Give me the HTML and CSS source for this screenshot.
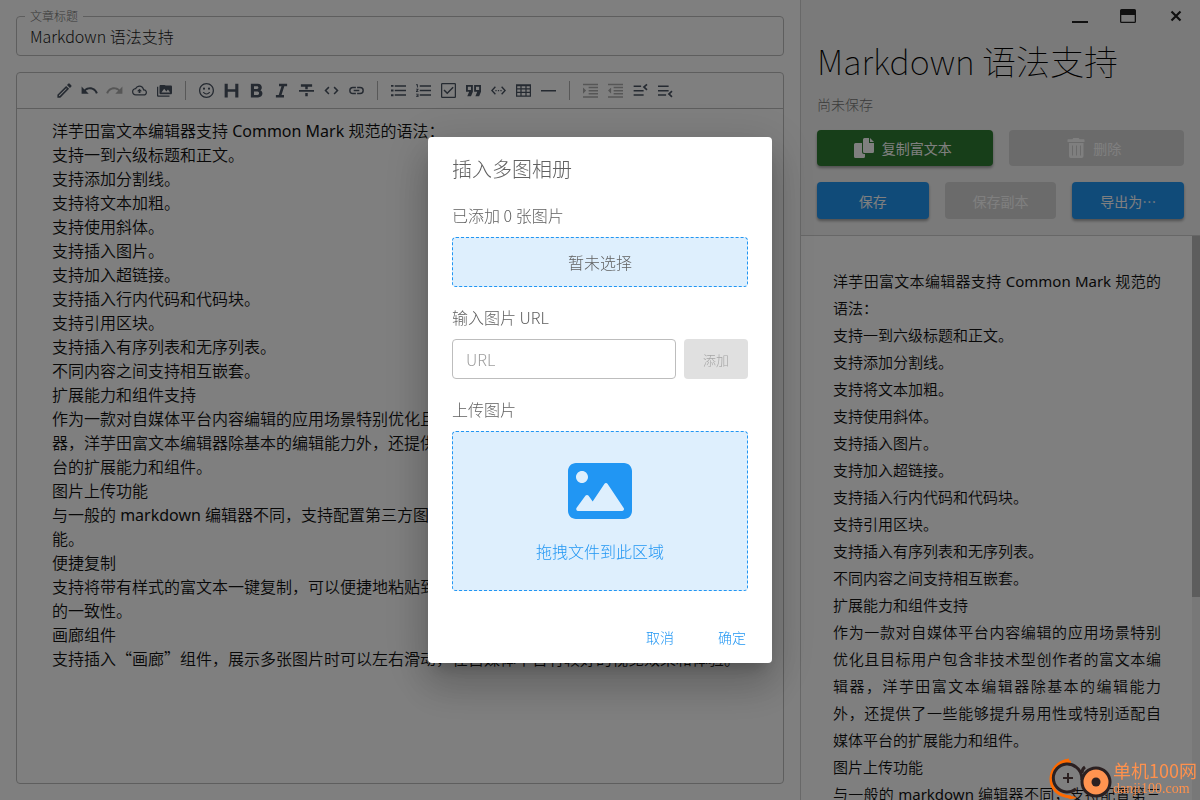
FILE: index.html
```html
<!DOCTYPE html>
<html lang="zh-CN">
<head>
<meta charset="utf-8">
<title>Markdown 语法支持</title>
<link rel="stylesheet" href="styles.css">
</head>
<body>
<div class="app">
  <main class="editor-pane">
    <div class="title-field">
      <label for="article-title">文章标题</label>
      <input id="article-title" type="text" value="Markdown 语法支持">
    </div>
    <section class="editor">
      <div class="toolbar">
        <button aria-label="编辑"><svg viewBox="0 0 24 24"><path d="M14.06 9.02l.92.92L5.92 19H5v-.92l9.06-9.06M17.66 3c-.25 0-.51.1-.7.29l-1.83 1.83 3.75 3.75 1.83-1.83c.39-.39.39-1.02 0-1.41l-2.34-2.34c-.2-.2-.45-.29-.71-.29zm-3.6 3.19L3 17.25V21h3.75L17.81 9.94l-3.75-3.75z"/></svg></button>
        <button aria-label="撤销"><svg viewBox="0 0 24 24"><path d="M12.5 8c-2.65 0-5.05.99-6.9 2.6L2 7v9h9l-3.62-3.62c1.39-1.16 3.16-1.88 5.12-1.88 3.54 0 6.55 2.31 7.6 5.5l2.37-.78C21.08 11.03 17.15 8 12.5 8z"/></svg></button>
        <button aria-label="重做" disabled><svg viewBox="0 0 24 24"><path d="M18.4 10.6C16.55 8.99 14.15 8 11.5 8c-4.65 0-8.58 3.03-9.96 7.22L3.9 16c1.05-3.19 4.05-5.5 7.6-5.5 1.95 0 3.73.72 5.12 1.88L13 16h9V7l-3.6 3.6z"/></svg></button>
        <button aria-label="上传"><svg viewBox="0 0 24 24"><path d="M19.35 10.04C18.67 6.59 15.64 4 12 4 9.11 4 6.6 5.64 5.35 8.04 2.34 8.36 0 10.91 0 14c0 3.31 2.69 6 6 6h13c2.76 0 5-2.24 5-5 0-2.64-2.05-4.78-4.65-4.96zM19 18H6c-2.21 0-4-1.79-4-4 0-2.05 1.53-3.76 3.56-3.97l1.07-.11.5-.95C8.08 7.14 9.94 6 12 6c2.62 0 4.88 1.86 5.39 4.43l.3 1.5 1.53.11c1.56.1 2.78 1.41 2.78 2.96 0 1.65-1.35 3-3 3zM8 13h2.55v3h2.9v-3H16l-4-4z"/></svg></button>
        <button aria-label="相册"><svg viewBox="0 0 24 24"><path d="M2 6H0v14c0 1.1.9 2 2 2h18v-2H2V6zm20-2h-8l-2-1H6c-1.1 0-2 .9-2 2v11c0 1.1.9 2 2 2h16c1.1 0 2-.9 2-2V6c0-1.1-.9-2-2-2zM7 15l4.5-6 3.5 4.51 2.500-3.010L21 15H7z"/></svg></button>
        <span class="divider"></span>
        <button aria-label="表情"><svg viewBox="0 0 24 24"><path d="M11.99 0C5.370 0 0 5.370 0 12s5.370 12 11.990 12C18.620 24 24 18.630 24 12S18.620 0 11.990 0zM12 22A10 10 0 1 1 12 2a10 10 0 0 1 0 20z"/><circle cx="8" cy="9" r="1.700"/><circle cx="16" cy="9" r="1.700"/><path d="M12 18.500c2.600 0 5-1.500 6-4h-2c-.8 1.300-2.300 2.200-4 2.200s-3.200-.9-4-2.200H6c1 2.500 3.400 4 6 4z"/></svg></button>
        <button aria-label="标题"><svg viewBox="0 0 24 24"><path d="M1 1h5v9h12V1h5v22h-5v-9H6v9H1z"/></svg></button>
        <button aria-label="加粗"><svg viewBox="0 0 24 24"><path fill-rule="evenodd" d="M3 1h11c4 0 6.500 2.500 6.500 6 0 2-1 3.800-2.500 4.600 2.200.8 3.500 2.700 3.500 5.200 0 3.800-2.700 6.200-7 6.200H3zm5 4v4.500h4.800c3 0 3-4.500 0-4.500zm0 8.500V19h5.500c3.400 0 3.400-5.500 0-5.500z"/></svg></button>
        <button aria-label="斜体"><svg viewBox="0 0 24 24"><path d="M8 1v4h4L7.500 19H3v4h13v-4h-4L16.500 5H21V1z"/></svg></button>
        <button aria-label="删除线"><svg viewBox="0 0 24 24"><path d="M3 2v4h7v4h4V6h7V2zM0 11v3h24v-3zm10 5v5h4v-5z"/></svg></button>
        <button aria-label="代码"><svg viewBox="0 0 24 24"><path d="M8.700 16.600 4.100 12l4.600-4.600L7 5.700.7 12 7 18.300zm6.600 0 4.600-4.600-4.600-4.600L17 5.700l6.300 6.300-6.300 6.300z"/></svg></button>
        <button aria-label="链接"><svg viewBox="0 0 24 24"><path d="M2.500 12c0-2 1.600-3.700 3.700-3.700H11V6H6.200a6 6 0 0 0 0 12H11v-2.300H6.200c-2.100 0-3.700-1.700-3.700-3.700zM7.500 13.200h9v-2.400h-9zM17.800 6H13v2.300h4.800a3.700 3.700 0 0 1 0 7.400H13V18h4.800a6 6 0 0 0 0-12z"/></svg></button>
        <span class="divider"></span>
        <button aria-label="无序列表"><svg viewBox="0 0 24 24"><path d="M0 3h4v3H0zm0 7.500h4v3H0zM0 18h4v3H0zM6 3.500h18V6H6zm0 7.250h18v2.500H6zM6 18h18v2.500H6z"/></svg></button>
        <button aria-label="有序列表"><svg viewBox="0 0 24 24"><path d="M0 2h3v5H1.500V3.500H0zm0 7h4v1.500L2 13h2v1.500H0V13l2-2.500H0zm0 8h4v5.500H0V21h2.500v-.7H1v-1.200h1.500v-.6H0zM6 3.500h18V6H6zm0 7.250h18v2.500H6zM6 18h18v2.500H6z"/></svg></button>
        <button aria-label="任务列表"><svg viewBox="0 0 24 24"><path fill-rule="evenodd" d="M2 0h20a2 2 0 0 1 2 2v20a2 2 0 0 1-2 2H2a2 2 0 0 1-2-2V2a2 2 0 0 1 2-2zm0 2v20h20V2zm8 16-6-6 1.700-1.700 4.300 4.300 8.600-8.600L20.300 7.700z"/></svg></button>
        <button aria-label="引用"><svg viewBox="0 0 24 24"><path fill-rule="evenodd" d="M0 3h11v11l-3 7H2l3-7H0zm3 3v5h5V6zM13 3h11v11l-3 7h-6l3-7h-5zm3 3v5h5V6z"/></svg></button>
        <button aria-label="代码块"><svg viewBox="0 0 24 24"><path d="M7.800 6.800 6.200 5.200 0 12l6.200 6.800 1.600-1.600L3 12zM16.200 6.800l1.600-1.600L24 12l-6.200 6.800-1.600-1.600L21 12zM7 11h2v2H7zm4 0h2v2h-2zm4 0h2v2h-2z"/></svg></button>
        <button aria-label="表格"><svg viewBox="0 0 24 24"><path fill-rule="evenodd" d="M0 2h24v20H0zm2 3v3.500h5V5zm7 0v3.500h6V5zm8 0v3.500h5V5zM2 10.500V14h5v-3.500zm7 0V14h6v-3.500zm8 0V14h5v-3.500zM2 16v4h5v-4zm7 0v4h6v-4zm8 0v4h5v-4z"/></svg></button>
        <button aria-label="分割线"><svg viewBox="0 0 24 24"><path d="M0 11h24v2.500H0z"/></svg></button>
        <span class="divider"></span>
        <button aria-label="增加缩进" disabled><svg viewBox="0 0 24 24"><path d="M0 1h24v2.500H0zm9 5h15v2.500H9zm0 5h15v2.500H9zm0 5h15v2.500H9zm-9 5h24v2.500H0zM0 7v10l5-5z"/></svg></button>
        <button aria-label="减少缩进" disabled><svg viewBox="0 0 24 24"><path d="M0 1h24v2.500H0zm9 5h15v2.500H9zm0 5h15v2.500H9zm0 5h15v2.500H9zm-9 5h24v2.500H0zM5 7v10l-5-5z"/></svg></button>
        <button aria-label="上方插入"><svg viewBox="0 0 24 24"><path d="M1 4h12v2.500H1zm0 7h16v2.500H1zm0 7h16v2.500H1zM21.500 1l-6 5.500 6 5.500 1.800-2-3.800-3.500 3.800-3.500z"/></svg></button>
        <button aria-label="下方插入"><svg viewBox="0 0 24 24"><path d="M0 4h17v2.500H0zm0 7h17v2.500H0zm0 7h13v2.500H0zM21.500 12l-6 5.500 6 5.500 1.800-2-3.800-3.500 3.800-3.500z"/></svg></button>
      </div>
      <div class="document">
        <p>洋芋田富文本编辑器支持 Common Mark 规范的语法：</p>
        <p>支持一到六级标题和正文。</p>
        <p>支持添加分割线。</p>
        <p>支持将文本加粗。</p>
        <p>支持使用斜体。</p>
        <p>支持插入图片。</p>
        <p>支持加入超链接。</p>
        <p>支持插入行内代码和代码块。</p>
        <p>支持引用区块。</p>
        <p>支持插入有序列表和无序列表。</p>
        <p>不同内容之间支持相互嵌套。</p>
        <p>扩展能力和组件支持</p>
        <p>作为一款对自媒体平台内容编辑的应用场景特别优化且目标用户包含非技术型创作者的富文本编辑器，洋芋田富文本编辑器除基本的编辑能力外，还提供了一些能够提升易用性或特别适配自媒体平台的扩展能力和组件。</p>
        <p>图片上传功能</p>
        <p>与一般的 markdown 编辑器不同，支持配置第三方图床服务，在编辑时可完成图片的快速上传功能。</p>
        <p>便捷复制</p>
        <p>支持将带有样式的富文本一键复制，可以便捷地粘贴到各类自媒体平台的编辑器，并保持样式效果的一致性。</p>
        <p>画廊组件</p>
        <p>支持插入<span class="quote">“画廊”</span>组件，展示多张图片时可以左右滑动，在自媒体平台有较好的视觉效果和体验。</p>
      </div>
    </section>
  </main>
  <aside class="side">
    <header class="side-head">
      <div class="window-controls">
        <button aria-label="最小化"><svg viewBox="0 0 16 16"><path d="M0 13h16v2H0z"/></svg></button>
        <button aria-label="最大化"><svg viewBox="0 0 16 16"><path fill-rule="evenodd" d="M1.500 1h13A1.500 1.500 0 0 1 16 2.500v11a1.500 1.500 0 0 1-1.500 1.500h-13A1.500 1.500 0 0 1 0 13.500v-11A1.500 1.500 0 0 1 1.500 1zM1.300 7v6.700h13.400V7z"/></svg></button>
        <button aria-label="关闭"><svg viewBox="0 0 16 16"><path d="M3.500 3.500l9 9m0-9l-9 9" fill="none" stroke="currentColor" stroke-width="2.200"/></svg></button>
      </div>
      <h1>Markdown 语法支持</h1>
      <p class="status">尚未保存</p>
      <div class="actions">
        <button class="btn green with-icon"><svg viewBox="0 0 20 20"><path d="M10.500 0H15v5h5v8.500a1.500 1.500 0 0 1-1.500 1.500h-8A1.500 1.500 0 0 1 9 13.500v-12A1.500 1.500 0 0 1 10.500 0zM16 0l4 4h-4zM1.500 5H8v9a2 2 0 0 0 2 2h1v2.500A1.500 1.500 0 0 1 9.500 20h-8A1.500 1.500 0 0 1 0 18.500v-12A1.500 1.500 0 0 1 1.500 5z"/></svg>复制富文本</button>
        <button class="btn with-icon" disabled><svg viewBox="0 0 18 20"><path fill-rule="evenodd" d="M1.500 1.300h4L6.300 0h5.400l.8 1.300h4c.7 0 1 .4 1 1V4h-17V2.300c0-.6.300-1 1-1zM2 5h14.500v13a2 2 0 0 1-2 2H4a2 2 0 0 1-2-2zm3 2.500v10h1v-10zm4 0v10h1v-10zm4 0v10h1v-10z"/></svg>删除</button>
      </div>
      <div class="actions">
        <button class="btn blue">保存</button>
        <button class="btn" disabled>保存副本</button>
        <button class="btn blue">导出为⋯</button>
      </div>
    </header>
    <div class="preview">
      <div class="preview-text">
        <p>洋芋田富文本编辑器支持 Common Mark 规范的语法：</p>
        <p>支持一到六级标题和正文。</p>
        <p>支持添加分割线。</p>
        <p>支持将文本加粗。</p>
        <p>支持使用斜体。</p>
        <p>支持插入图片。</p>
        <p>支持加入超链接。</p>
        <p>支持插入行内代码和代码块。</p>
        <p>支持引用区块。</p>
        <p>支持插入有序列表和无序列表。</p>
        <p>不同内容之间支持相互嵌套。</p>
        <p>扩展能力和组件支持</p>
        <p>作为一款对自媒体平台内容编辑的应用场景特别优化且目标用户包含非技术型创作者的富文本编辑器，洋芋田富文本编辑器除基本的编辑能力外，还提供了一些能够提升易用性或特别适配自媒体平台的扩展能力和组件。</p>
        <p>图片上传功能</p>
        <p>与一般的 markdown 编辑器不同，支持配置第三方图床服务，在编辑时可完成图片的快速上传功能。</p>
      </div>
      <div class="scroll-track"><div class="scroll-thumb"></div></div>
    </div>
  </aside>
</div>
<div class="backdrop">
  <div class="dialog" role="dialog" aria-labelledby="dialog-title">
    <h2 id="dialog-title">插入多图相册</h2>
    <p class="caption">已添加 0 张图片</p>
    <div class="dashed empty">暂未选择</div>
    <label class="caption" for="image-url">输入图片 URL</label>
    <div class="url-row">
      <input id="image-url" type="text" placeholder="URL">
      <button class="add" disabled>添加</button>
    </div>
    <p class="caption">上传图片</p>
    <div class="dashed drop">
      <svg viewBox="0 32 512 448"><path d="M448 32H64C28.600 32 0 60.600 0 96v320c0 35.400 28.600 64 64 64h384c35.400 0 64-28.600 64-64V96c0-35.400-28.600-64-64-64zM112 96c26.500 0 48 21.500 48 48s-21.500 48-48 48-48-21.500-48-48 21.500-48 48-48zm334.100 311.600C443.300 412.800 437.900 416 432 416H82c-6 0-11.500-3.400-14.300-8.800-2.700-5.400-2.200-11.800 1.400-16.600l70-96c3-4.200 7.800-6.600 12.900-6.600s9.900 2.400 12.900 6.600l32.500 44.500 93.300-140c3-4.400 8-7.100 13.300-7.100s10.300 2.700 13.300 7.100l128 192c3.300 4.900 3.600 11.200.8 16.500z"/></svg>
      <span>拖拽文件到此区域</span>
    </div>
    <div class="dialog-actions">
      <button>取消</button>
      <button>确定</button>
    </div>
  </div>
</div>
<div class="site-mark">
  <svg viewBox="0 0 64 42"><g fill="none"><path d="M20 2C8 4 2 12 2 21s6 17 20 18" stroke="#ff6a00" stroke-width="3"/><path d="M10 5q6-6 12-2v3zM15 37l13 2q-7 5-13-2z" fill="#ff6a00"/><path d="M27 9A14 14 0 1 0 27 31M27 9q6 4 6 13" stroke="#2b2021" stroke-width="3"/><path d="M19 15v10M14 20h10" stroke="#2b2021" stroke-width="2"/><path d="M33 15q0-4 3-6" stroke="#2b2021" stroke-width="3"/><circle cx="47" cy="24" r="14" fill="#ff9350" stroke="#2b2021" stroke-width="3"/><circle cx="47" cy="24" r="4.500" fill="#2b2021"/></g></svg>
  <div class="mark-text"><span>单机100网</span><small>danji100.com</small></div>
</div>
</body>
</html>
```
FILE: styles.css
```css
* { box-sizing: border-box; }
body { margin: 0; font-family: "Noto Sans CJK SC", sans-serif; font-weight: 300; color: #212121; background: #fff; }
h1, h2, p { margin: 0; font-weight: 300; }
button, input { font: inherit; color: inherit; }
button { border: 0; padding: 0; background: none; }
svg { fill: currentColor; display: block; }

.app { display: grid; grid-template-columns: 2fr 1fr; height: 100vh; overflow: hidden; }
.editor-pane { min-width: 0; min-height: 0; padding: 16px; display: flex; flex-direction: column; gap: 16px; }

.title-field { position: relative; height: 40px; flex: none; }
.title-field label { position: absolute; top: -9px; left: 9px; padding: 0 5px; font-size: 12px; line-height: 18px; color: #757575; background: #fff; }
.title-field input { width: 100%; height: 100%; padding: 0 14px 0 13px; border: 1px solid #bdbdbd; border-radius: 4px; background: none; font-size: 16px; }

.editor { flex: 1; min-height: 0; border: 1px solid #bdbdbd; border-radius: 4px; overflow: hidden; }
.toolbar { display: flex; align-items: center; height: 36px; padding: 0 35px; border-bottom: 1px solid #bdbdbd; color: #4b5563; }
.toolbar button { width: 25px; height: 25px; display: grid; place-items: center; }
.toolbar button:disabled { color: #adadad; }
.toolbar svg { width: 15px; height: 15px; }
.toolbar button:nth-child(-n+3) svg { width: 19px; height: 19px; }
.divider { width: 1px; height: 19px; margin: 0 8px; background: #b0b0b0; }
.document { padding: 10px 35px; font-size: 16px; line-height: 24px; color: #111; }
.document p, .preview-text p { font-family: "Noto Sans", "Noto Sans CJK SC DemiLight", "Noto Sans CJK SC Light", "Noto Sans CJK SC", sans-serif; font-weight: 400; }
.quote { font-family: "Noto Sans CJK SC DemiLight", "Noto Sans CJK SC Light", "Noto Sans CJK SC", sans-serif; line-height: 1; }

.side { min-width: 0; min-height: 0; display: flex; flex-direction: column; border-left: 1px solid #d0d0d0; }
.side-head { padding: 0 16px 16px; background: #f5f5f5; border-bottom: 1px solid #cfcfcf; }
.window-controls { display: flex; justify-content: flex-end; gap: 32px; padding-top: 8px; }
.window-controls svg { width: 16px; height: 16px; }
.side-head h1 { font-size: 34px; font-weight: 100; line-height: 44px; margin-top: 15px; white-space: nowrap; color: #000; }
.status { margin: 10px 0 15px; font-size: 14px; line-height: 22px; color: #757575; }
.actions { display: flex; gap: 16px; }
.actions + .actions { margin-top: 16px; }
.btn { flex: 1; height: 36px; display: flex; align-items: center; justify-content: center; gap: 8px; border-radius: 4px; font-size: 14px; font-weight: 400; color: #fff; box-shadow: 0 2px 3px rgba(0, 0, 0, .35); }
.actions + .actions .btn { height: 37px; }
.btn svg { height: 20px; }
.with-icon { padding-right: 4px; }
.btn.green { background: #2e7d32; }
.btn.blue { background: #2196f3; }
.btn:disabled { background: #d7d7d7; color: #fff; box-shadow: none; }

.preview { flex: 1; min-height: 0; display: flex; }
.preview-text { flex: 1; padding: 32px 31px 0 32px; overflow: hidden; font-size: 15px; line-height: 27px; text-align: justify; color: #111; }
.scroll-track { width: 8px; background: #f1f1f1; }
.scroll-thumb { height: 64%; background: #bbb; }

.backdrop { position: fixed; inset: 0; display: grid; place-items: center; background: rgba(0, 0, 0, .5); }
.dialog { width: 344px; padding: 16px 24px 8px; border-radius: 4px; background: #fff; color: #616161; box-shadow: 0 11px 15px -7px rgba(0, 0, 0, .2), 0 24px 38px 3px rgba(0, 0, 0, .14), 0 9px 46px 8px rgba(0, 0, 0, .12); }
.dialog h2 { font-size: 20px; line-height: 32px; margin-bottom: 18px; }
.caption { display: block; font-size: 16px; line-height: 24px; margin-bottom: 10px; }
.dashed { display: flex; align-items: center; justify-content: center; border: 1px dashed #2196f3; border-radius: 4px; background: #deeffd; }
.empty { height: 50px; margin-bottom: 18px; }
.url-row { display: flex; gap: 8px; margin-bottom: 18px; }
.url-row input { flex: 1; min-width: 0; height: 40px; padding: 0 13px; border: 1px solid #bdbdbd; border-radius: 4px; font-size: 16px; }
.url-row input::placeholder { color: #9e9e9e; opacity: 1; }
.add { width: 64px; border-radius: 4px; font-size: 13px; background: #e0e0e0; color: #a6a6a6; }
.drop { height: 160px; flex-direction: column; gap: 20px; padding-top: 4px; color: #2196f3; }
.drop svg { width: 64px; height: 56px; }
.drop span { line-height: 24px; }
.dialog-actions { display: flex; justify-content: flex-end; gap: 8px; margin: 28px -16px 0 0; }
.dialog-actions button { width: 64px; height: 36px; font-size: 14px; color: #2196f3; }

.site-mark { position: fixed; right: 3px; bottom: 0; display: flex; align-items: center; color: #ff914d; }
.site-mark svg { width: 64px; height: 42px; }
.mark-text { display: flex; flex-direction: column; }
.mark-text span { font-size: 18px; line-height: 20px; font-weight: 400; }
.mark-text small { font-family: "Liberation Serif", serif; font-size: 14px; line-height: 18px; }
```
